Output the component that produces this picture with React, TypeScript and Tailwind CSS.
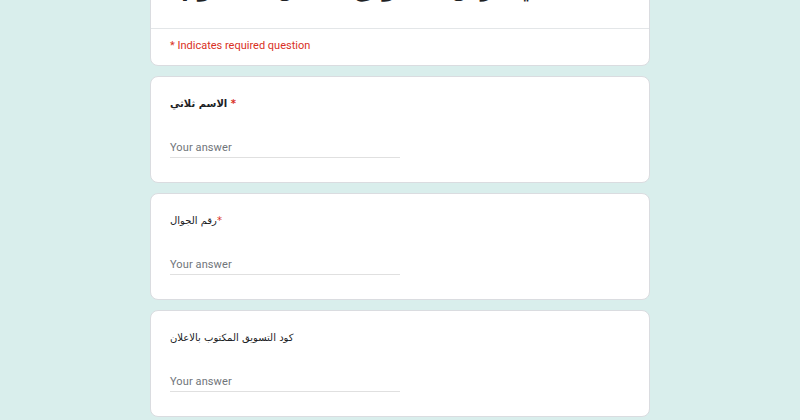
import React from 'react';

interface QuestionProps {
  title: string;
  required?: boolean;
  gap?: boolean;
  bold?: boolean;
}

const Question: React.FC<QuestionProps> = ({ title, required, gap, bold }) => {
  return (
    <div className="bg-white border border-[#dadce0] rounded-lg px-[19px] pt-[18px] pb-[24px]">
      <div className={`text-[10px] text-[#202124] leading-[18px] h-[18px] ${bold ? 'font-bold' : ''}`} style={{ fontFamily: '"DejaVu Sans", sans-serif' }}>
        {title}
        {required && <span className="text-[#d93025]">{gap ? ' *' : '*'}</span>}
      </div>
      <div className="mt-[27px] w-[230px] border-b border-[#e0e0e0]">
        <span className="block text-[11px] text-[#70757a] tracking-[0.1px] leading-[16px] pb-[1px]" style={{ fontFamily: 'Roboto, sans-serif' }}>
          Your answer
        </span>
      </div>
    </div>
  );
};

export default function App() {
  return (
    <div className="w-[800px] h-[420px] overflow-hidden bg-[#d9eeec]">
      <div className="w-[500px] mx-auto flex flex-col gap-[10px] -mt-[61px]">
        {/* Header card */}
        <div className="bg-white border border-[#dadce0] rounded-lg">
          <div className="px-[19px] pt-[31px] pb-[21px] border-b border-[#e3e6e8]">
            <div className="text-[22px] font-bold text-[#202124] leading-[36px] text-center whitespace-nowrap" dir="rtl" style={{ fontFamily: '"DejaVu Sans", sans-serif' }}>
              سجل في عرض التسويق الخاص بنا اليوم
            </div>
          </div>
          <div className="px-[19px] pt-[9px] pb-[11px] text-[11px] text-[#d93025] leading-[16px]" style={{ fontFamily: 'Roboto, sans-serif' }}>
            * Indicates required question
          </div>
        </div>

        <Question title="الاسم ثلاثي" required gap bold />
        <Question title="رقم الجوال" required />
        <Question title="كود التسويق المكتوب بالاعلان" />
      </div>
    </div>
  );
}
